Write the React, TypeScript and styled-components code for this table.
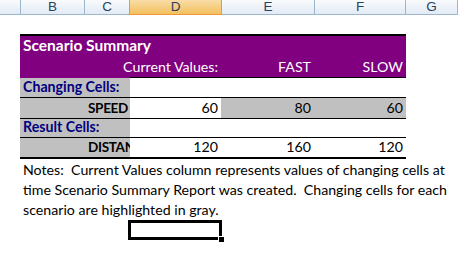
import React from 'react';
import styled, { createGlobalStyle, css } from 'styled-components';

const GlobalStyle = createGlobalStyle`
	html, body {
		margin: 0;
		padding: 0;
		background: #ffffff;
	}
	body {
		font-family: Lato, 'Liberation Sans', sans-serif;
		font-size: 14.2px;
		color: #000000;
	}
`;

const Sheet = styled.div`
	width: 458px;
	height: 269px;
	overflow: hidden;
`;

const ColumnHeaders = styled.div`
	display: flex;
	height: 15px;
	box-sizing: border-box;
	border-bottom: 1px solid #9eb6ce;
	background: linear-gradient(#f9fbfd, #e2eaf5);
`;

const HeaderCell = styled.div<{ $width?: number, $active?: boolean }>`
	flex: ${p => p.$width ? `0 0 ${p.$width}px` : '1 1 auto'};
	box-sizing: border-box;
	border-right: 1px solid #9eb6ce;
	display: flex;
	align-items: center;
	justify-content: center;
	font-family: 'Liberation Sans', sans-serif;
	font-size: 13.5px;
	color: #27415f;
	line-height: 14px;
	${p => p.$active && css`
		background: linear-gradient(#f9dca6, #f1c15f);
		border-right-color: #f29536;
		box-shadow: -1px 0 0 #f29536;
		height: 15px;
		border-bottom: 1px solid #f29536;
	`}
`;

const Table = styled.div`
	margin-top: 19px;
	margin-left: 20px;
	width: 386px;
	border-top: 2px solid #000000;
	display: grid;
	grid-template-columns: 65px 45px 91px 93px 92px;
`;

const Cell = styled.div<{
	$height: number,
	$fill?: 'purple' | 'gray' | 'white',
	$align?: 'left' | 'right',
	$bottom?: number,
	$span?: number,
	$clip?: boolean,
}>`
	grid-column: span ${p => p.$span || 1};
	height: ${p => p.$height}px;
	box-sizing: border-box;
	display: flex;
	align-items: flex-end;
	justify-content: ${p => p.$align === 'right' ? 'flex-end' : 'flex-start'};
	padding: 0 3px 1px 3px;
	white-space: nowrap;
	line-height: 18px;
	overflow: ${p => p.$clip ? 'hidden' : 'visible'};
	background: ${p => p.$fill === 'purple' ? '#800080' : p.$fill === 'gray' ? '#c0c0c0' : '#ffffff'};
	color: ${p => p.$fill === 'purple' ? '#ffffff' : '#000000'};
	border-bottom: ${p => p.$bottom ? `${p.$bottom}px solid #000000` : 'none'};
`;

const Title = styled.span`
	font-weight: 700;
	font-size: 15.5px;
	padding-bottom: 1px;
`;

const Label = styled.span<{ $navy?: boolean }>`
	font-weight: 700;
	color: ${p => p.$navy ? '#000080' : '#000000'};
	${p => !p.$navy && css`
		font-size: 13.5px;
		letter-spacing: -0.3px;
	`}
`;

const Notes = styled.div`
	padding: 1px 0 0 23px;
	line-height: 20px;
	white-space: nowrap;
`;

const SelectionRow = styled.div`
	display: flex;
	padding-left: 128px;
`;

const SelectedCell = styled.div`
	position: relative;
	width: 94px;
	height: 20px;
	box-sizing: border-box;
	border: 3px solid #000000;
`;

const FillHandle = styled.div`
	position: absolute;
	right: -5px;
	bottom: -5px;
	width: 5px;
	height: 5px;
	background: #000000;
	border: 1px solid #ffffff;
	border-right: none;
	border-bottom: none;
`;

const columns = [
	{ name: '', width: 21 },
	{ name: 'B', width: 64 },
	{ name: 'C', width: 45 },
	{ name: 'D', width: 92, active: true },
	{ name: 'E', width: 93 },
	{ name: 'F', width: 91 },
	{ name: 'G' },
];

type DataRow = {
	label: string,
	values: string[],
	gray: boolean[],
	height: number,
	bottom: number,
};

const dataRows: DataRow[] = [
	{ label: 'SPEED', values: ['60', '80', '60'], gray: [false, true, true], height: 21, bottom: 1 },
	{ label: 'DISTANCE', values: ['120', '160', '120'], gray: [false, false, false], height: 21, bottom: 2 },
];

const App: React.FC = () => {
	function renderSection (title: string, row: DataRow, headHeight: number) {
		return (
			<>
				<Cell $height={headHeight} $fill='gray' $span={2} $bottom={1}>
					<Label $navy>{title}</Label>
				</Cell>
				<Cell $height={headHeight} $bottom={1} />
				<Cell $height={headHeight} $bottom={1} />
				<Cell $height={headHeight} $bottom={1} />
				<Cell $height={row.height} $fill='gray' $bottom={row.bottom} />
				<Cell $height={row.height} $fill='gray' $bottom={row.bottom} $clip>
					<Label>{row.label}</Label>
				</Cell>
				{row.values.map((v, i) => (
					<Cell key={i} $height={row.height} $fill={row.gray[i] ? 'gray' : 'white'} $align='right' $bottom={row.bottom}>
						{v}
					</Cell>
				))}
			</>
		);
	}

	return (
		<Sheet>
			<GlobalStyle />
			<ColumnHeaders>
				{columns.map((c, i) => (
					<HeaderCell key={i} $width={c.width} $active={c.active}>{c.name}</HeaderCell>
				))}
			</ColumnHeaders>
			<Table>
				<Cell $height={20} $fill='purple' $span={5}>
					<Title>Scenario Summary</Title>
				</Cell>
				<Cell $height={22} $fill='purple' $span={2} />
				<Cell $height={22} $fill='purple' $align='right' $bottom={1}>Current Values:</Cell>
				<Cell $height={22} $fill='purple' $align='right' $bottom={1}>FAST</Cell>
				<Cell $height={22} $fill='purple' $align='right' $bottom={1}>SLOW</Cell>
				{renderSection('Changing Cells:', dataRows[0], 20)}
				{renderSection('Result Cells:', dataRows[1], 19)}
			</Table>
			<Notes>
				Notes:&nbsp; Current Values column represents values of changing cells at<br />
				time Scenario Summary Report was created.&nbsp; Changing cells for each<br />
				scenario are highlighted in gray.
			</Notes>
			<SelectionRow>
				<SelectedCell>
					<FillHandle />
				</SelectedCell>
			</SelectionRow>
		</Sheet>
	);
};

export default App;
